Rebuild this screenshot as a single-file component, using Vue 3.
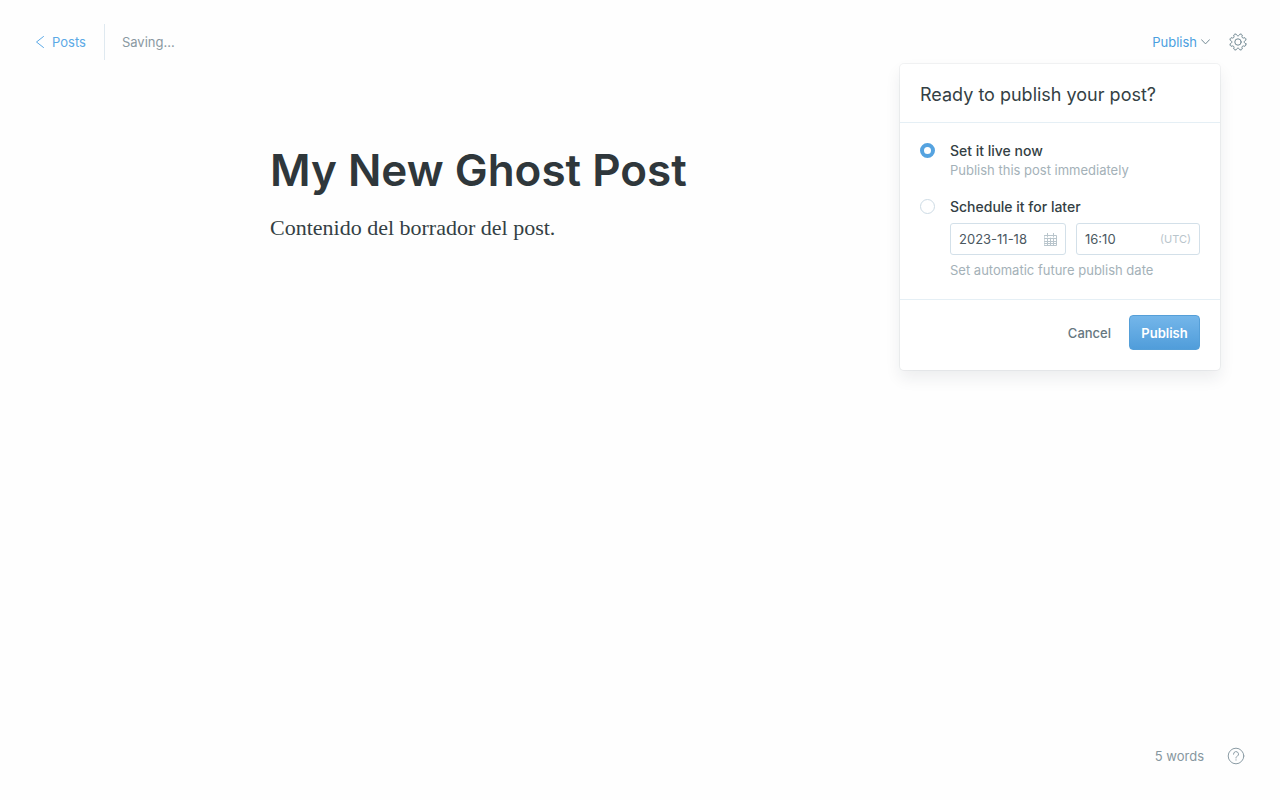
<script setup>
import { ref } from 'vue'

const title = ref('My New Ghost Post')
const mode = ref('now')
const date = ref('2023-11-18')
const time = ref('16:10')

// Outline of the settings cog: eight rounded teeth around the centre.
function cogPath(teeth, outer, inner) {
  const step = (Math.PI * 2) / teeth
  const at = (r, a) => `${(9 + r * Math.cos(a)).toFixed(2)} ${(9 + r * Math.sin(a)).toFixed(2)}`
  let d = ''
  for (let i = 0; i < teeth; i++) {
    const a = (i + 0.5) * step
    d += `${i ? 'L' : 'M'}${at(outer - 0.4, a - step * 0.2)}`
    d += `Q${at(outer + 0.3, a)} ${at(outer - 0.4, a + step * 0.2)}`
    d += `C${at(inner, a + step * 0.3)} ${at(inner, a + step * 0.7)} ${at(outer - 0.4, a + step * 0.8)}`
  }
  return d + 'Z'
}
const cog = cogPath(8, 8.6, 5.6)
</script>

<template>
  <div class="editor">
    <header class="topbar">
      <div class="left">
        <a class="back" href="#posts">
          <svg width="8" height="12" viewBox="0 0 8 12" aria-hidden="true"><path d="M7.500.5.5 6l7 5.500" /></svg>
          <span>Posts</span>
        </a>
        <div class="status">Saving...</div>
      </div>
      <div class="right">
        <div class="dropdown">
          <button class="trigger" type="button" aria-expanded="true">
            <span>Publish</span>
            <svg width="9" height="6" viewBox="0 0 9 6" aria-hidden="true"><path d="m.5.7 4 4.200 4-4.200" /></svg>
          </button>
          <form class="menu" @submit.prevent>
            <h2 class="menu-title">Ready to publish your post?</h2>
            <div class="options">
              <div class="option">
                <input id="now" v-model="mode" class="radio" type="radio" name="mode" value="now" />
                <div class="detail">
                  <label class="name" for="now">Set it live now</label>
                  <p class="hint">Publish this post immediately</p>
                </div>
              </div>
              <div class="option">
                <input id="later" v-model="mode" class="radio" type="radio" name="mode" value="later" />
                <div class="detail">
                  <label class="name" for="later">Schedule it for later</label>
                  <div class="fields">
                    <div class="field date">
                      <input v-model="date" type="text" aria-label="Publish date" />
                      <svg width="13" height="13" viewBox="0 0 13 13" aria-hidden="true">
                        <path d="M.5 2.500h12v10H.5zM.5 5.500h12M.5 8.500h12M.5 10.500h12M3.500 5v7.500M6.500 5v7.500M9.500 5v7.500M3.500 0v3.500M9.500 0v3.500" />
                      </svg>
                    </div>
                    <div class="field time">
                      <input v-model="time" type="text" aria-label="Publish time" />
                      <span class="zone">(UTC)</span>
                    </div>
                  </div>
                  <p class="hint">Set automatic future publish date</p>
                </div>
              </div>
            </div>
            <footer class="actions">
              <button class="cancel" type="button">Cancel</button>
              <button class="submit" type="submit">Publish</button>
            </footer>
          </form>
        </div>
        <button class="icon" type="button" aria-label="Settings">
          <svg width="18" height="18" viewBox="0 0 18 18" aria-hidden="true">
            <path :d="cog" /><circle cx="9" cy="9" r="3.200" />
          </svg>
        </button>
      </div>
    </header>

    <main class="canvas">
      <input v-model="title" class="title" type="text" aria-label="Post title" />
      <p class="body">Contenido del borrador del post.</p>
    </main>

    <footer class="bottombar">
      <span>5 words</span>
      <a class="help" href="#help" aria-label="Help">
        <svg width="18" height="18" viewBox="0 0 18 18" aria-hidden="true">
          <circle cx="9" cy="9" r="7.800" />
          <path d="M6.500 7.200a2.500 2.500 0 1 1 3.700 2.100c-.8.5-1.200.8-1.200 1.700" />
          <path d="M9 12.800v.3" />
        </svg>
      </a>
    </footer>
  </div>
</template>

<style>
body {
  background: #fefefe;
}
</style>

<style scoped>
.editor {
  display: flex;
  flex-direction: column;
  min-height: 100vh;
  font-family: Inter, "Liberation Sans", sans-serif;
  font-size: 13px;
  line-height: 20px;
  color: #738a94;
}
.editor *,
.editor {
  box-sizing: border-box;
}
h2,
p {
  margin: 0;
}
button,
input {
  margin: 0;
  padding: 0;
  border: 0;
  background: none;
  font: inherit;
  color: inherit;
}
button {
  cursor: pointer;
}
a {
  text-decoration: none;
}
svg {
  display: block;
  flex: none;
  fill: none;
  stroke: currentColor;
  stroke-linecap: round;
  stroke-linejoin: round;
}
.topbar {
  display: flex;
  justify-content: space-between;
  padding: 24px 33px 0 36px;
}
.left,
.right {
  display: flex;
  align-items: center;
  height: 36px;
}
.back {
  display: flex;
  align-items: center;
  gap: 8px;
  height: 36px;
  padding-right: 18px;
  border-right: 1px solid #dfe9f0;
  color: #5ba9e6;
}
.status {
  padding-left: 17px;
  color: #8a99a2;
}
.right {
  gap: 19px;
}
.dropdown {
  position: relative;
}
.trigger {
  display: flex;
  align-items: center;
  gap: 4px;
  color: #4a9fdf;
}
.trigger svg {
  color: #738a94;
}
.menu {
  position: absolute;
  top: 32px;
  right: -10px;
  width: 320px;
  border-radius: 4px;
  background: #fff;
  box-shadow: 0 0 0 1px rgba(99, 114, 130, 0.08), 0 8px 16px rgba(27, 39, 51, 0.08);
}
.menu-title {
  padding: 19px 20px 15px;
  border-bottom: 1px solid #e5eff5;
  font-size: 18px;
  font-weight: 400;
  line-height: 24px;
  color: #343f44;
}
.options {
  display: flex;
  flex-direction: column;
  gap: 18px;
  padding: 18px 20px 20px;
}
.option {
  display: flex;
  gap: 15px;
}
.detail {
  flex: 1;
  min-width: 0;
}
.radio {
  appearance: none;
  flex: none;
  width: 15px;
  height: 15px;
  margin-top: 2px;
  border: 1px solid #cddbe5;
  border-radius: 50%;
  background: #fff;
}
.radio:checked {
  border: 4px solid #55a3e0;
}
.name {
  display: block;
  font-size: 14px;
  font-weight: 500;
  color: #343f44;
}
.hint {
  line-height: 18px;
  color: #a4b1b8;
}
.fields {
  display: flex;
  gap: 10px;
  margin: 6px 0;
}
.field {
  display: flex;
  align-items: center;
  height: 32px;
  padding: 0 8px;
  border: 1px solid #d3e0e9;
  border-radius: 3px;
  background: #fff;
  color: #4b585f;
}
.field input {
  flex: 1;
  min-width: 0;
  width: 100%;
  outline: 0;
}
.date {
  flex: 0 0 116px;
}
.date svg {
  color: #b9c5cc;
}
.time {
  flex: 1;
  min-width: 0;
}
.zone {
  font-size: 11px;
  color: #b9c5cc;
}
.actions {
  display: flex;
  justify-content: flex-end;
  align-items: center;
  gap: 18px;
  padding: 15px 20px 20px;
  border-top: 1px solid #e5eff5;
}
.cancel {
  color: #66777f;
  font-weight: 500;
}
.submit {
  min-width: 71px;
  height: 35px;
  padding: 0 11px;
  border: 1px solid #559fd8;
  border-radius: 4px;
  background: linear-gradient(#74b6ea, #509dda);
  color: #fff;
  font-weight: 600;
}
.icon {
  color: #738a94;
}
.canvas {
  flex: 1;
  width: 100%;
  max-width: 740px;
  margin: 0 auto;
  padding-top: 80px;
}
.title {
  display: block;
  width: 100%;
  outline: 0;
  font-size: 44px;
  font-weight: 600;
  line-height: 60px;
  color: #2f373b;
}
.body {
  margin-top: 12px;
  font-family: Georgia, "Liberation Serif", serif;
  font-size: 22px;
  line-height: 32px;
  color: #343f44;
}
.bottombar {
  display: flex;
  justify-content: flex-end;
  align-items: center;
  gap: 23px;
  padding: 0 35px 34px;
  color: #87979f;
}
.help {
  color: #8b9ca5;
}
</style>
